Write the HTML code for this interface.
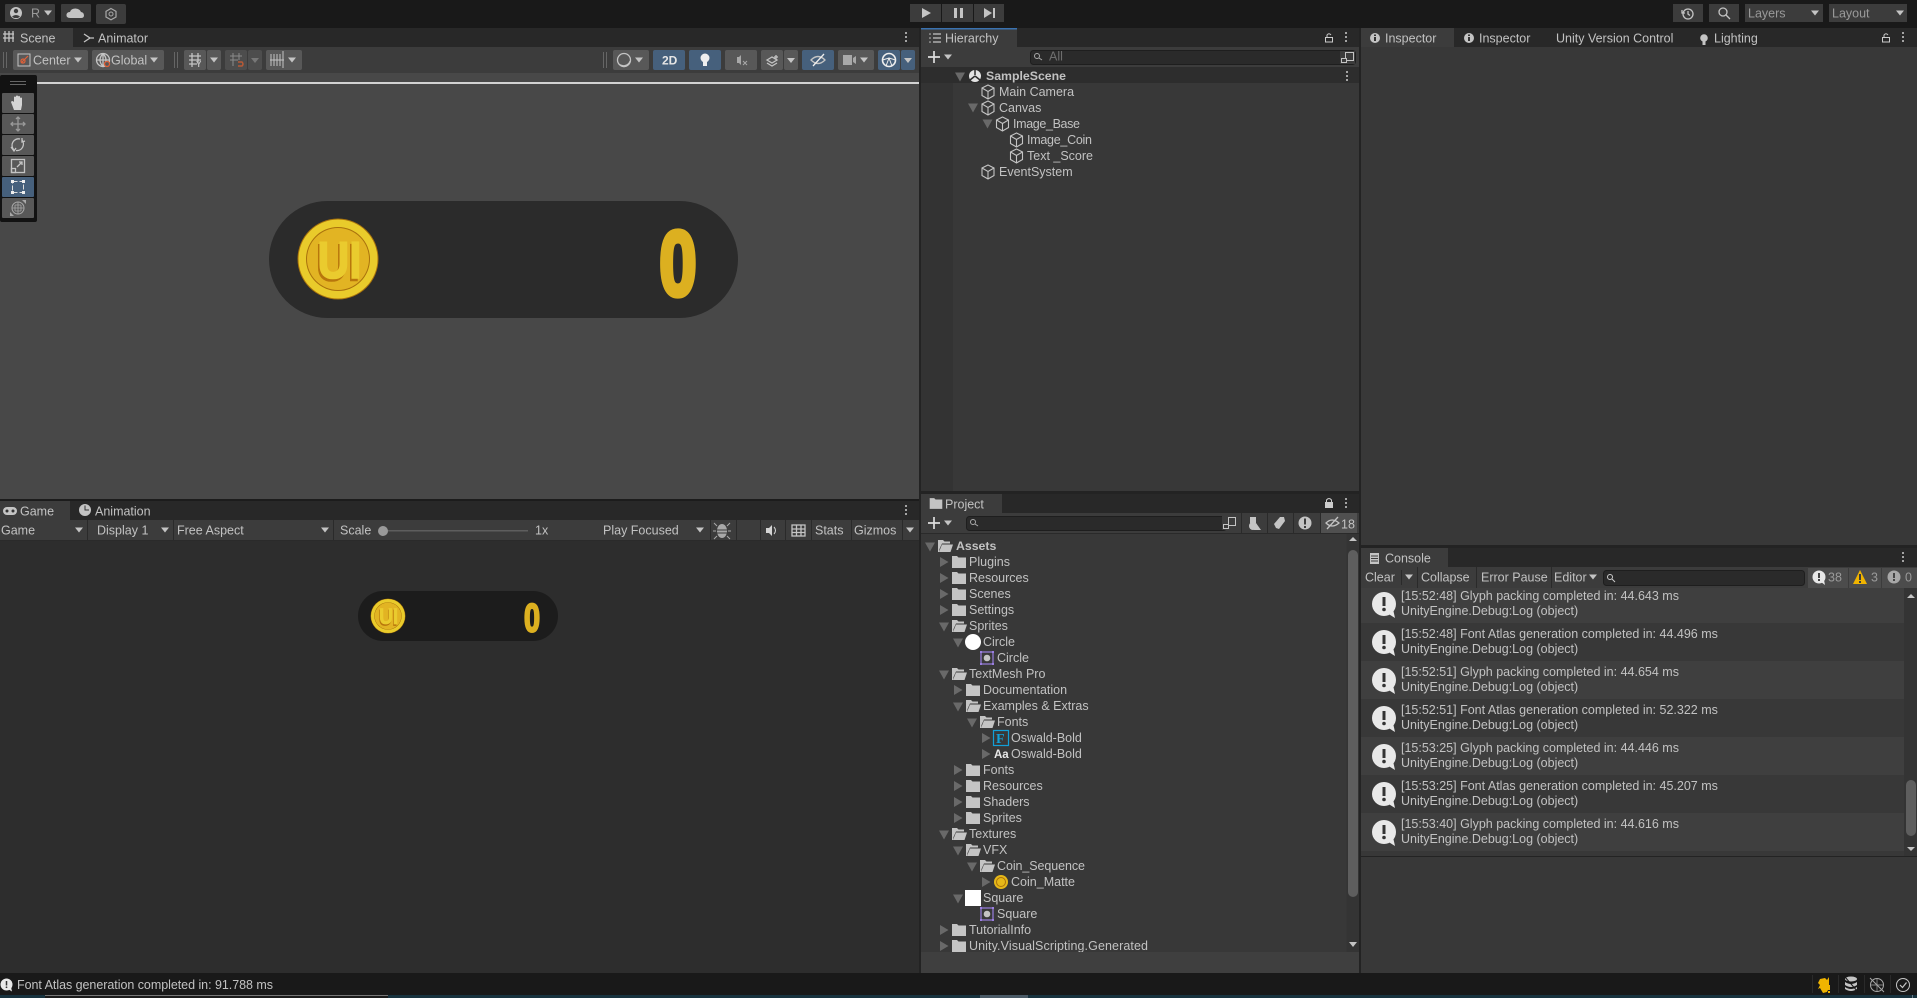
<!DOCTYPE html>
<html lang="en"><head><meta charset="utf-8"><title>Unity Editor</title>
<style>
html,body{margin:0;padding:0;background:#191919;width:1917px;height:998px;overflow:hidden}
svg{display:block}
text{font-family:"Liberation Sans",sans-serif;font-size:12.5px;fill:#c2c2c2}
text:not(.nt){transform:translateY(-.5px)}
.b{font-weight:bold}
.d{fill:#9a9a9a}
.s{fill:none;stroke:#c4c4c4;stroke-width:1.3}
.k{fill:#c4c4c4}
</style></head><body>
<svg width="1917" height="998" viewBox="0 0 1917 998" xmlns="http://www.w3.org/2000/svg">
<defs>
<polygon id="tdn" points="-5,-4.5 5,-4.5 0,4.5" fill="#696969"/>
<polygon id="trt" points="-4,-5 4.5,0 -4,5" fill="#696969"/>
<polygon id="dd" points="-4,-2.5 4,-2.5 0,2.5" fill="#c4c4c4"/>
<g id="cube" fill="none" stroke="#c4c4c4" stroke-width="1.1"><path d="M0,-7 L6,-4 V3.5 L0,7 L-6,3.5 V-4 Z"/><path d="M-6,-4 L0,-0.5 L6,-4 M0,-0.5 V7"/></g>
<path id="fol" fill="#c4c4c4" d="M-7,-6 H-2 L-0.5,-4.5 H7 V6 H-7 Z"/>
<g id="fop" fill="#c4c4c4"><path d="M-7,-6 H-2 L-0.5,-4.5 H5 V-2.5 H-3 L-5.5,3 L-6,6 H-7 Z"/><path d="M-3,-1.5 H8 L5.5,6 H-6 Z"/></g>
<g id="spr"><rect x="-6" y="-6" width="12" height="12" fill="none" stroke="#9a7ee0" stroke-width="1.2"/><circle cx="0" cy="0" r="3.3" fill="#c4c4c4"/><g fill="#9a7ee0"><rect x="-7" y="-7" width="2" height="2"/><rect x="5" y="-7" width="2" height="2"/><rect x="-7" y="5" width="2" height="2"/><rect x="5" y="5" width="2" height="2"/></g></g>
<g id="info"><circle cx="0" cy="-1" r="12" fill="#e8e8e8"/><path d="M3,8 L11,13 L9,4 Z" fill="#e8e8e8"/><rect x="-1.5" y="-8" width="3" height="9" fill="#333"/><circle cx="0" cy="4.5" r="1.8" fill="#333"/></g>
<g id="coin">
<circle r="40.5" fill="#a8720c"/><circle r="39.5" fill="#e9cb2b"/><circle r="32" fill="#a9710d"/><circle r="31" fill="#e2b423"/>
<text x="-22" y="21.5" class="b nt" style="font-size:52px;fill:#b8760c;stroke:#b8760c;stroke-width:1.6" textLength="44" lengthAdjust="spacingAndGlyphs">UI</text>
<text x="-20.5" y="19" class="b nt" style="font-size:52px;fill:#eacb2e;stroke:#eacb2e;stroke-width:1.6" textLength="44" lengthAdjust="spacingAndGlyphs">UI</text>
</g>
</defs>

<rect width="1917" height="998" fill="#191919"/>
<!-- taskbar hint -->
<rect y="995" width="1917" height="3" fill="#18333f"/>
<rect x="45" y="995" width="343" height="3" fill="#1b1b1b"/><rect x="45" y="995" width="343" height="1" fill="#777"/>
<rect x="980" y="995" width="48" height="3" fill="#4a5a66"/>

<!-- top bar -->
<g fill="#3c3c3c">
<rect x="5" y="4" width="50" height="18" rx="1"/><rect x="61" y="4" width="30" height="18" rx="1"/><rect x="96" y="4" width="30" height="20" rx="2"/>
<rect x="910" y="4" width="31" height="18"/><rect x="942" y="4" width="31" height="18"/><rect x="974" y="4" width="30" height="18"/>
<rect x="1673" y="4" width="30" height="18"/><rect x="1709" y="4" width="30" height="18"/><rect x="1745" y="4" width="78" height="18"/><rect x="1829" y="4" width="78" height="18"/>
</g>
<circle cx="16" cy="13" r="6" fill="#c4c4c4"/><circle cx="16" cy="11" r="2.2" fill="#3c3c3c"/><path d="M12,16.5 Q16,13.5 20,16.5 L18,18 H14 Z" fill="#3c3c3c"/>
<text x="31" y="18" class="d">R</text><use href="#dd" x="48" y="13"/>
<path d="M70,18 Q66,18 66.500,14.500 Q67,12 70,12 Q71,8.500 75.500,8.500 Q80,9 81,12 Q84,12.500 84,15.500 Q84,18 81,18 Z" fill="#c4c4c4"/>
<path d="M111,8.5 L116,11.3 V17 L111,19.8 L106,17 V11.3 Z" fill="none" stroke="#a8a8a8" stroke-width="1.2"/><circle cx="111" cy="14" r="2" fill="none" stroke="#a8a8a8"/>
<polygon points="922,8 922,18 931,13" fill="#c4c4c4"/>
<rect x="954" y="8" width="3" height="10" fill="#c4c4c4"/><rect x="960" y="8" width="3" height="10" fill="#c4c4c4"/>
<polygon points="984,8 984,18 992,13" fill="#c4c4c4"/><rect x="993" y="8" width="2" height="10" fill="#c4c4c4"/>
<circle cx="1688" cy="14" r="5" class="s"/><path d="M1688,11 V14 L1690,15.5 M1682,10 V13 H1685" class="s"/>
<circle cx="1723" cy="12" r="4" class="s"/><path d="M1726,15 L1730,19" class="s" stroke-width="2"/>
<text x="1748" y="18" class="d">Layers</text><use href="#dd" x="1815" y="13"/>
<text x="1832" y="18" class="d">Layout</text><use href="#dd" x="1900" y="13"/>

<!-- scene panel -->
<rect x="0" y="28" width="919" height="19" fill="#282828"/>
<rect x="0" y="28" width="73" height="19" fill="#3c3c3c"/>
<path d="M6,32 V43 M10,32 V43 M14,32 V43 M4,35 H15 M4,39 H15" class="s" stroke-width="1.1" transform="translate(-1,-1)"/>
<text x="20" y="43">Scene</text>
<path d="M84,34 L90,38 L84,42 M90,38 H94" class="s"/><text x="98" y="43">Animator</text>
<circle cx="906" cy="33" r="1" fill="#ccc"/><circle cx="906" cy="37" r="1" fill="#ccc"/><circle cx="906" cy="41" r="1" fill="#ccc"/>
<rect y="47" width="919" height="26" fill="#3c3c3c"/>
<rect y="73" width="919" height="426" fill="#484848"/>
<rect y="82" width="919" height="2" fill="#d2d2d2"/>
<!-- scene toolbar -->
<g fill="#585858">
<rect x="13" y="50" width="75" height="20" rx="2"/><rect x="92" y="50" width="72" height="20" rx="2"/>
<rect x="184" y="50" width="22" height="20" rx="2"/><rect x="207" y="50" width="14" height="20" rx="2"/>
<rect x="225" y="50" width="22" height="20" rx="2" opacity=".6"/><rect x="248" y="50" width="14" height="20" rx="2" opacity=".6"/>
<rect x="266" y="50" width="36" height="20" rx="2"/>
<rect x="613" y="50" width="36" height="20" rx="2"/><rect x="725" y="50" width="32" height="20" rx="2"/>
<rect x="761" y="50" width="22" height="20" rx="2"/><rect x="784" y="50" width="14" height="20" rx="2"/>
<rect x="838" y="50" width="36" height="20" rx="2"/>
</g>
<g fill="#46607c">
<rect x="653" y="50" width="32" height="20" rx="2"/><rect x="689" y="50" width="32" height="20" rx="2"/><rect x="802" y="50" width="32" height="20" rx="2"/>
<rect x="878" y="50" width="22" height="20" rx="2"/><rect x="901" y="50" width="14" height="20" rx="2"/>
</g>
<g fill="#666"><rect x="3" y="52" width="1" height="16"/><rect x="6" y="52" width="1" height="16"/><rect x="174" y="52" width="1" height="16"/><rect x="177" y="52" width="1" height="16"/><rect x="603" y="52" width="1" height="16"/><rect x="606" y="52" width="1" height="16"/></g>
<rect x="18" y="54" width="12" height="12" fill="none" stroke="#c4c4c4"/><path d="M21,63 L28,56" stroke="#e06038" stroke-width="1.2"/><circle cx="23" cy="61" r="2" fill="none" stroke="#e06038" stroke-width="1.2"/>
<text x="33" y="65">Center</text><use href="#dd" x="78" y="60"/>
<circle cx="103" cy="60" r="6.5" class="s"/><path d="M96.5,60 H109.5 M103,53.5 V66.500 M103,53.500 Q97,60 103,66.500 Q109,60 103,53.500" class="s" stroke-width=".8"/><circle cx="107" cy="64" r="2.500" fill="#585858" stroke="#e06038" stroke-width="1.300"/>
<text x="111" y="65">Global</text><use href="#dd" x="154" y="60"/>
<path d="M189,56 H201 M189,60 H201 M189,64 H197 M192,53 V67 M198,53 V63" class="s" stroke-width="1"/><text x="196" y="67" class="b nt" style="font-size:8px">Y</text><use href="#dd" x="214" y="60"/>
<path d="M230,56 H242 M230,60 H238 M233,53 V66 M239,53 V60" stroke="#8a8a8a" fill="none"/><path d="M238,62 H242 Q244,64 242,66 H238" stroke="#b85a36" stroke-width="1.500" fill="none"/><polygon points="251,58 259,58 255,63" fill="#777"/>
<path d="M271,54 V66 M274,54 V66 M277,54 V66 M280,54 V66 M283,51 V68" stroke="#c4c4c4"/><path d="M270,60 H284" stroke="#c4c4c4"/><use href="#dd" x="292" y="60"/>
<circle cx="624" cy="60" r="6.500" class="s"/><path d="M619,64 A7,7 0 0,0 630,61 A6,6 0 0,1 619,64" fill="#c4c4c4" stroke="#c4c4c4"/><use href="#dd" x="639" y="60"/>
<text x="662" y="65" class="b" style="fill:#e6e6e6;font-size:12px">2D</text>
<circle cx="705" cy="58" r="4.500" fill="#eee"/><rect x="703" y="62" width="4" height="4" fill="#eee"/>
<path d="M737,57 H739 L741,55 V65 L739,63 H737 Z" fill="#a8a8a8"/><path d="M743,61 L747,65 M747,61 L743,65" stroke="#a8a8a8"/>
<path d="M767,60 L772,57 L777,60 L772,63 Z M767,63 L772,66 L777,63" class="s" stroke-width="1.200"/><path d="M776,55 V59 M774,57 H778" class="s"/><polygon points="787,58 795,58 791,63" fill="#c4c4c4"/>
<path d="M811,60 Q818,53 825,60 Q818,67 811,60 Z" class="s" stroke="#eee"/><path d="M813,66 L824,54" stroke="#eee" stroke-width="1.300"/>
<rect x="843" y="55" width="9" height="10" fill="#a8a8a8"/><polygon points="853,58 856,56 856,64 853,62" fill="#a8a8a8"/><use href="#dd" x="864" y="60"/>
<circle cx="889" cy="60" r="6.500" fill="none" stroke="#eee" stroke-width="1.600"/><path d="M882.500,60 L889,58 L895.500,60 M889,58 L886,66 M889,58 L892,66" stroke="#eee" fill="none"/><polygon points="904,58 912,58 908,63" fill="#c4c4c4"/>

<!-- tools overlay -->
<rect y="75" width="37" height="147" rx="2" fill="#121212"/>
<rect x="10" y="81" width="16" height="1" fill="#666"/><rect x="10" y="84" width="16" height="1" fill="#666"/>
<g fill="#585858"><rect x="2" y="93" width="32" height="20" rx="1"/><rect x="2" y="114" width="32" height="20" rx="1"/><rect x="2" y="135" width="32" height="20" rx="1"/><rect x="2" y="156" width="32" height="20" rx="1"/><rect x="2" y="198" width="32" height="20" rx="1"/></g>
<rect x="2" y="177" width="32" height="20" rx="1" fill="#46607c"/>
<path d="M14,110 L11,102 Q12,100 14,102 V97 Q15,96 16,97 V101 V96 Q17,95 18,96 V101 V96.500 Q19,95.500 20,96.500 V101 V98 Q21,97 22,98 V105 L21,110 Z" fill="#d4d4d4"/>
<path d="M18,117 V131 M11,124 H25 M16,119 L18,117 L20,119 M16,129 L18,131 L20,129 M13,122 L11,124 L13,126 M23,122 L25,124 L23,126" fill="none" stroke="#9a9a9a" stroke-width="1.300"/>
<path d="M20,139 A6.500,6.500 0 0,0 14,150 M16,150.500 A6.500,6.500 0 0,0 22,140" class="s"/><path d="M11,147 L14,151 L16,148 M22,138 L22,142 L25,141" class="s" stroke-width="1"/>
<rect x="11.500" y="159.500" width="13" height="13" class="s"/><rect x="11.500" y="168.500" width="4" height="4" class="s"/><path d="M17,167 L22,162 M19,162 H22 V165" class="s"/>
<rect x="12.500" y="181.500" width="11" height="11" fill="none" stroke="#ddd" stroke-width="1" stroke-dasharray="5 2"/><g fill="#eee"><rect x="11" y="180" width="3" height="3"/><rect x="22" y="180" width="3" height="3"/><rect x="11" y="191" width="3" height="3"/><rect x="22" y="191" width="3" height="3"/></g>
<circle cx="18" cy="208" r="6" fill="none" stroke="#a8a8a8" stroke-width="1"/><path d="M12,208 H24 M18,202 V214 M15,205 H21 M15,211 H21 M15,205 V211 M21,205 V211" fill="none" stroke="#a8a8a8" stroke-width=".8"/><polygon points="10,216 14,216 10,212" fill="#a8a8a8"/><polygon points="26,200 22,200 26,204" fill="#a8a8a8"/>

<!-- big pill -->
<rect x="269" y="201" width="469" height="117" rx="58.500" fill="#2b2b2b"/>
<use href="#coin" transform="translate(338,259)"/>
<text text-anchor="middle" transform="translate(678,295) scale(.76,1.040)" class="b nt" style="font-size:88px;fill:#dcb020;stroke:#dcb020;stroke-width:5;stroke-linejoin:round">0</text>

<!-- dark separators -->
<rect x="0" y="499" width="919" height="2" fill="#1c1c1c"/>
<rect x="919" y="28" width="2" height="945" fill="#232323"/>
<rect x="1359" y="28" width="2" height="945" fill="#232323"/>

<!-- game panel -->
<rect y="501" width="919" height="19" fill="#282828"/>
<rect y="501" width="70" height="19" fill="#3c3c3c"/>
<rect x="3" y="507" width="14" height="8" rx="4" fill="#c4c4c4"/><circle cx="7" cy="511" r="1.500" fill="#333"/><circle cx="13" cy="511" r="1.500" fill="#333"/>
<text x="20" y="516">Game</text>
<circle cx="85" cy="510" r="6" fill="#c4c4c4"/><path d="M85,505.500 V510 H89" stroke="#333" fill="none"/>
<text x="95" y="516">Animation</text>
<circle cx="906" cy="506" r="1" fill="#ccc"/><circle cx="906" cy="510" r="1" fill="#ccc"/><circle cx="906" cy="514" r="1" fill="#ccc"/>
<rect y="520" width="919" height="21" fill="#3c3c3c"/>
<rect y="541" width="919" height="432" fill="#2d2d2d"/>
<g fill="#2a2a2a"><rect x="87" y="520" width="1" height="21"/><rect x="173" y="520" width="1" height="21"/><rect x="333" y="520" width="1" height="21"/><rect x="710" y="520" width="1" height="21"/><rect x="736" y="520" width="1" height="21"/><rect x="760" y="520" width="1" height="21"/><rect x="785" y="520" width="1" height="21"/><rect x="811" y="520" width="1" height="21"/><rect x="851" y="520" width="1" height="21"/><rect x="902" y="520" width="1" height="21"/><rect y="540" width="919" height="1"/></g>
<text x="1" y="535">Game</text><use href="#dd" x="79" y="530"/>
<text x="97" y="535">Display 1</text><use href="#dd" x="165" y="530"/>
<text x="177" y="535">Free Aspect</text><use href="#dd" x="325" y="530"/>
<text x="340" y="535">Scale</text>
<rect x="383" y="530" width="145" height="1.500" fill="#5e5e5e"/><circle cx="383" cy="531" r="5" fill="#999"/>
<text x="535" y="535">1x</text>
<text x="603" y="535">Play Focused</text><use href="#dd" x="700" y="530"/>
<ellipse cx="722" cy="531" rx="5" ry="7" fill="#a8a8a8"/><path d="M717,526 L714,523 M727,526 L730,523 M716,531 H713 M728,531 H731 M717,536 L714,539 M727,536 L730,539" stroke="#a8a8a8"/><path d="M717,530 H727 M717,533 H727" stroke="#3c3c3c"/>
<path d="M766,528 H769 L772,525 V536 L769,533 H766 Z" fill="#d4d4d4"/><path d="M774,527 Q777,530.500 774,534" stroke="#d4d4d4" fill="none"/>
<rect x="792" y="525" width="13" height="11" class="s" stroke-width="1"/><path d="M792,529 H805 M792,532.500 H805 M796.500,525 V536 M801,525 V536" class="s" stroke-width="1"/>
<text x="815" y="535">Stats</text><text x="854" y="535">Gizmos</text><use href="#dd" x="910" y="530"/>
<rect x="358" y="591" width="200" height="50" rx="25" fill="#1c1c1c"/>
<use href="#coin" transform="translate(388,616) scale(.43)"/>
<text text-anchor="middle" transform="translate(532,631.500) scale(.76,1.040)" class="b nt" style="font-size:38px;fill:#dcb020;stroke:#dcb020;stroke-width:2;stroke-linejoin:round">0</text>

<!-- hierarchy -->
<rect x="921" y="28" width="438" height="19" fill="#282828"/>
<rect x="921" y="28" width="96" height="19" fill="#3c3c3c"/><rect x="921" y="28" width="96" height="1.500" fill="#3a72b0"/>
<path d="M933,34 H941 M933,38 H941 M933,42 H941" class="s"/><circle cx="930" cy="34" r=".8" fill="#c4c4c4"/><circle cx="930" cy="38" r=".8" fill="#c4c4c4"/><circle cx="930" cy="42" r=".8" fill="#c4c4c4"/>
<text x="945" y="43">Hierarchy</text>
<rect x="1325.500" y="37.500" width="7" height="4.500" fill="none" stroke="#ccc"/><path d="M1327,37 V35 Q1329,32.500 1331,35" fill="none" stroke="#ccc"/>
<circle cx="1346" cy="33" r="1" fill="#ccc"/><circle cx="1346" cy="37" r="1" fill="#ccc"/><circle cx="1346" cy="41" r="1" fill="#ccc"/>
<rect x="921" y="47" width="438" height="20" fill="#3c3c3c"/>
<path d="M934,51 V63 M928,57 H940" stroke="#ddd" stroke-width="1.700"/><use href="#dd" x="948" y="57"/>
<rect x="1030.500" y="50.500" width="325" height="14" rx="3" fill="#2a2a2a" stroke="#1e1e1e"/>
<circle cx="1037" cy="56" r="2.500" fill="none" stroke="#aaa"/><path d="M1039,58 L1042,60" stroke="#aaa"/>
<text x="1049" y="61" style="fill:#6e6e6e">All</text>
<rect x="1340" y="51" width="15" height="13" fill="#3c3c3c"/><rect x="1345.500" y="52.500" width="8" height="8" fill="none" stroke="#c4c4c4"/><rect x="1341.500" y="58.500" width="5" height="4" fill="#3c3c3c" stroke="#c4c4c4"/>
<rect x="921" y="67" width="438" height="424" fill="#383838"/>
<rect x="921" y="83" width="32" height="408" fill="#333"/>
<rect x="921" y="67" width="438" height="16" fill="#2d2d2d"/>
<use href="#tdn" x="960" y="77"/>
<circle cx="975" cy="76" r="6" fill="#e4e4e4"/><path d="M975,70 V75 M975,76 L970,80 M975,76 L980,80" stroke="#2d2d2d" stroke-width="1.500"/>
<text x="986" y="80.500" class="b" style="font-size:12.300px">SampleScene</text>
<circle cx="1347" cy="72" r="1" fill="#ccc"/><circle cx="1347" cy="76" r="1" fill="#ccc"/><circle cx="1347" cy="80" r="1" fill="#ccc"/>
<use href="#cube" x="988" y="92"/><text x="999" y="96.500">Main Camera</text>
<use href="#tdn" x="973" y="108"/><use href="#cube" x="988" y="108"/><text x="999" y="112.500">Canvas</text>
<use href="#tdn" x="987.500" y="124"/><use href="#cube" x="1002.500" y="124"/><text x="1013" y="128.500" textLength="67">Image_Base</text>
<use href="#cube" x="1016.500" y="140"/><text x="1027" y="144.500" textLength="65">Image_Coin</text>
<use href="#cube" x="1016.500" y="156"/><text x="1027" y="160.500" textLength="66">Text _Score</text>
<use href="#cube" x="988" y="172"/><text x="999" y="176.500">EventSystem</text>
<rect x="921" y="491" width="438" height="3" fill="#232323"/>

<!-- project -->
<rect x="921" y="494" width="438" height="19" fill="#282828"/>
<rect x="921" y="494" width="81" height="19" fill="#3c3c3c"/>
<use href="#fol" transform="translate(936,503.500) scale(.9)"/><text x="945" y="509">Project</text>
<rect x="1325" y="502" width="8" height="6" fill="#ccc"/><path d="M1326.500,502 V500 Q1329,497 1331.500,500 V502" fill="none" stroke="#ccc"/>
<circle cx="1346" cy="499" r="1" fill="#ccc"/><circle cx="1346" cy="503" r="1" fill="#ccc"/><circle cx="1346" cy="507" r="1" fill="#ccc"/>
<rect x="921" y="513" width="438" height="20" fill="#3c3c3c"/><rect x="921" y="533" width="438" height="1" fill="#2a2a2a"/>
<path d="M934,517 V529 M928,523 H940" stroke="#ddd" stroke-width="1.700"/><use href="#dd" x="948" y="523"/>
<rect x="966.500" y="516.500" width="260" height="14" rx="3" fill="#2a2a2a" stroke="#1e1e1e"/>
<circle cx="973" cy="522" r="2.500" fill="none" stroke="#aaa"/><path d="M975,524 L978,526" stroke="#aaa"/>
<rect x="1222" y="516" width="14" height="14" fill="#3c3c3c"/><rect x="1228.500" y="517.500" width="7" height="8" fill="none" stroke="#c4c4c4"/><rect x="1223.500" y="524.500" width="5" height="4" fill="#3c3c3c" stroke="#c4c4c4"/>
<g fill="#2a2a2a"><rect x="1241" y="513" width="1" height="20"/><rect x="1267" y="513" width="1" height="20"/><rect x="1293" y="513" width="1" height="20"/><rect x="1320" y="513" width="1" height="20"/></g>
<rect x="1321" y="513" width="36" height="20" fill="#505050"/>
<rect x="1250" y="517" width="6" height="6" fill="#c4c4c4"/><circle cx="1253" cy="526" r="4" fill="#c4c4c4"/><polygon points="1256,523 1261,530 1254,530" fill="#c4c4c4"/>
<path d="M1276,528 L1274,524 L1280,517 H1284 L1285,521 L1279,529 Z" fill="#c4c4c4"/>
<circle cx="1305" cy="523" r="6.500" fill="#c4c4c4"/><rect x="1304" y="518.500" width="2" height="6" fill="#3c3c3c"/><rect x="1304" y="526" width="2" height="2" fill="#3c3c3c"/>
<path d="M1326,523 Q1332,517 1339,523 Q1332,529 1326,523 Z" class="s" stroke-width="1"/><path d="M1327,529 L1338,517" class="s" stroke-width="1"/>
<text x="1341" y="529">18</text>
<rect x="921" y="534" width="438" height="418" fill="#383838"/>
<rect x="921" y="952" width="438" height="21" fill="#3f3f3f"/>
<rect x="1346.500" y="534" width="12.500" height="418" fill="#343434"/>
<rect x="1348" y="550" width="10" height="347" rx="5" fill="#5e5e5e"/>
<polygon points="1349,541 1357,541 1353,537" fill="#c4c4c4"/><polygon points="1349,942 1357,942 1353,947" fill="#c4c4c4"/>
<svg x="921" y="534" width="425" height="418" viewBox="921 534 425 418" overflow="hidden">
<use href="#tdn" x="930" y="547"/><use href="#fop" x="945" y="546"/><text x="956" y="550.500" class="b" style="font-size:12.300px">Assets</text>
<use href="#trt" x="944" y="562"/><use href="#fol" x="959" y="562"/><text x="969" y="566.500">Plugins</text>
<use href="#trt" x="944" y="578"/><use href="#fol" x="959" y="578"/><text x="969" y="582.500">Resources</text>
<use href="#trt" x="944" y="594"/><use href="#fol" x="959" y="594"/><text x="969" y="598.500">Scenes</text>
<use href="#trt" x="944" y="610"/><use href="#fol" x="959" y="610"/><text x="969" y="614.500">Settings</text>
<use href="#tdn" x="944" y="627"/><use href="#fop" x="959" y="626"/><text x="969" y="630.500">Sprites</text>
<use href="#tdn" x="958" y="643"/><circle cx="973" cy="642" r="8" fill="#fff"/><text x="983" y="646.500">Circle</text>
<use href="#spr" x="987" y="658"/><text x="997" y="662.500">Circle</text>
<use href="#tdn" x="944" y="675"/><use href="#fop" x="959" y="674"/><text x="969" y="678.500">TextMesh Pro</text>
<use href="#trt" x="958" y="690"/><use href="#fol" x="973" y="690"/><text x="983" y="694.500">Documentation</text>
<use href="#tdn" x="958" y="707"/><use href="#fop" x="973" y="706"/><text x="983" y="710.500">Examples &amp; Extras</text>
<use href="#tdn" x="972" y="723"/><use href="#fop" x="987" y="722"/><text x="997" y="726.500">Fonts</text>
<use href="#trt" x="986" y="738"/><rect x="993.500" y="730.500" width="15" height="15" fill="none" stroke="#12a0d8" stroke-width="1.200"/><text x="996" y="743" class="b nt" style="font-size:14px;fill:#12a0d8;font-family:'Liberation Serif',serif">F</text><text x="1011" y="742.500">Oswald-Bold</text>
<use href="#trt" x="986" y="754"/><text x="994" y="758.500" class="b" style="fill:#e8e8e8;font-size:11.500px">Aa</text><text x="1011" y="758.500">Oswald-Bold</text>
<use href="#trt" x="958" y="770"/><use href="#fol" x="973" y="770"/><text x="983" y="774.500">Fonts</text>
<use href="#trt" x="958" y="786"/><use href="#fol" x="973" y="786"/><text x="983" y="790.500">Resources</text>
<use href="#trt" x="958" y="802"/><use href="#fol" x="973" y="802"/><text x="983" y="806.500">Shaders</text>
<use href="#trt" x="958" y="818"/><use href="#fol" x="973" y="818"/><text x="983" y="822.500">Sprites</text>
<use href="#tdn" x="944" y="835"/><use href="#fop" x="959" y="834"/><text x="969" y="838.500">Textures</text>
<use href="#tdn" x="958" y="851"/><use href="#fop" x="973" y="850"/><text x="983" y="854.500">VFX</text>
<use href="#tdn" x="972" y="867"/><use href="#fop" x="987" y="866"/><text x="997" y="870.500" textLength="88">Coin_Sequence</text>
<use href="#trt" x="986" y="882"/><circle cx="1001" cy="882" r="7" fill="#e6b818"/><circle cx="1001" cy="882" r="4.500" fill="none" stroke="#a9710d"/><text x="1011" y="886.500" textLength="64">Coin_Matte</text>
<use href="#tdn" x="958" y="899"/><rect x="965" y="890" width="16" height="16" fill="#fff"/><text x="983" y="902.500">Square</text>
<use href="#spr" x="987" y="914"/><text x="997" y="918.500">Square</text>
<use href="#trt" x="944" y="930"/><use href="#fol" x="959" y="930"/><text x="969" y="934.500">TutorialInfo</text>
<use href="#trt" x="944" y="946"/><use href="#fol" x="959" y="946"/><text x="969" y="950.500" textLength="179">Unity.VisualScripting.Generated</text>
</svg>

<!-- inspector -->
<rect x="1361" y="28" width="556" height="19" fill="#282828"/>
<rect x="1361" y="28" width="93" height="19" fill="#3c3c3c"/>
<rect x="1361" y="47" width="556" height="498" fill="#383838"/>
<circle cx="1375" cy="38" r="5" fill="#c4c4c4"/><rect x="1374" y="37" width="2" height="4" fill="#333"/><rect x="1374" y="34.500" width="2" height="1.500" fill="#333"/>
<text x="1385" y="43">Inspector</text>
<circle cx="1469" cy="38" r="5" fill="#c4c4c4"/><rect x="1468" y="37" width="2" height="4" fill="#333"/><rect x="1468" y="34.500" width="2" height="1.500" fill="#333"/>
<text x="1479" y="43">Inspector</text>
<text x="1556" y="43">Unity Version Control</text>
<circle cx="1704" cy="38" r="3.800" fill="#c4c4c4"/><rect x="1702.500" y="41" width="3" height="4" fill="#c4c4c4"/>
<text x="1714" y="43">Lighting</text>
<rect x="1882.500" y="37.500" width="7" height="4.500" fill="none" stroke="#ccc"/><path d="M1884,37 V35 Q1886,32.500 1888,35" fill="none" stroke="#ccc"/>
<circle cx="1903" cy="33" r="1" fill="#ccc"/><circle cx="1903" cy="37" r="1" fill="#ccc"/><circle cx="1903" cy="41" r="1" fill="#ccc"/>
<rect x="1361" y="545" width="556" height="3" fill="#232323"/>

<!-- console -->
<rect x="1361" y="548" width="556" height="19" fill="#282828"/>
<rect x="1361" y="548" width="87" height="19" fill="#3c3c3c"/>
<rect x="1370" y="553" width="9" height="11" fill="#c4c4c4"/><path d="M1371,556 H1378 M1371,558.500 H1378 M1371,561 H1378" stroke="#3c3c3c"/>
<text x="1385" y="563">Console</text>
<circle cx="1903" cy="553" r="1" fill="#ccc"/><circle cx="1903" cy="557" r="1" fill="#ccc"/><circle cx="1903" cy="561" r="1" fill="#ccc"/>
<rect x="1361" y="567" width="556" height="21" fill="#3c3c3c"/>
<text x="1365" y="582">Clear</text><use href="#dd" x="1409" y="577"/>
<text x="1421" y="582">Collapse</text><text x="1481" y="582">Error Pause</text><text x="1554" y="582">Editor</text><use href="#dd" x="1593" y="577"/>
<g fill="#2a2a2a"><rect x="1401" y="570" width="1" height="15"/><rect x="1417" y="567" width="1" height="21"/><rect x="1476" y="567" width="1" height="21"/><rect x="1551" y="567" width="1" height="21"/></g>
<rect x="1603.500" y="570.500" width="201" height="15" rx="3" fill="#2a2a2a" stroke="#1e1e1e"/>
<circle cx="1610" cy="577" r="2.500" fill="none" stroke="#ccc"/><path d="M1612,579 L1615,582" stroke="#ccc"/>
<rect x="1808" y="568" width="40" height="20" fill="#4c4c4c"/><rect x="1849" y="568" width="32" height="20" fill="#4c4c4c"/><rect x="1882" y="568" width="35" height="20" fill="#4c4c4c"/>
<circle cx="1819" cy="577" r="6.500" fill="#e8e8e8"/><path d="M1821,582 L1825,585 L1824,580 Z" fill="#e8e8e8"/><rect x="1818" y="573" width="2" height="5" fill="#444"/><rect x="1818" y="579" width="2" height="2" fill="#444"/>
<text x="1828" y="582" class="d">38</text>
<polygon points="1860,570 1867,584 1853,584" fill="#f0b400"/><rect x="1859" y="574" width="2" height="6" fill="#3c3c3c"/><rect x="1859" y="581" width="2" height="2" fill="#3c3c3c"/>
<text x="1871" y="582" class="d">3</text>
<circle cx="1894" cy="577" r="6.500" fill="#a8a8a8"/><rect x="1893" y="573" width="2" height="5" fill="#444"/><rect x="1893" y="579" width="2" height="2" fill="#444"/>
<text x="1905" y="582" class="d">0</text>
<rect x="1361" y="588" width="556" height="385" fill="#383838"/>
<rect x="1361" y="588" width="543" height="35" fill="#3f3f3f"/>
<rect x="1361" y="661" width="543" height="38" fill="#3f3f3f"/>
<rect x="1361" y="737" width="543" height="38" fill="#3f3f3f"/>
<rect x="1361" y="813" width="543" height="38" fill="#3f3f3f"/>
<rect x="1904" y="588" width="13" height="268" fill="#343434"/>
<rect x="1906" y="780" width="10" height="56" rx="5" fill="#5e5e5e"/>
<polygon points="1907,598 1915,598 1911,594" fill="#c4c4c4"/><polygon points="1907,847 1915,847 1911,851" fill="#c4c4c4"/>
<rect x="1361" y="856" width="556" height="1" fill="#232323"/>
<use href="#info" x="1384" y="605"/><text x="1401" y="600.500">[15:52:48] Glyph packing completed in: 44.643 ms</text><text x="1401" y="615.500">UnityEngine.Debug:Log (object)</text>
<use href="#info" x="1384" y="643"/><text x="1401" y="638.500">[15:52:48] Font Atlas generation completed in: 44.496 ms</text><text x="1401" y="653.500">UnityEngine.Debug:Log (object)</text>
<use href="#info" x="1384" y="681"/><text x="1401" y="676.500">[15:52:51] Glyph packing completed in: 44.654 ms</text><text x="1401" y="691.500">UnityEngine.Debug:Log (object)</text>
<use href="#info" x="1384" y="719"/><text x="1401" y="714.500">[15:52:51] Font Atlas generation completed in: 52.322 ms</text><text x="1401" y="729.500">UnityEngine.Debug:Log (object)</text>
<use href="#info" x="1384" y="757"/><text x="1401" y="752.500">[15:53:25] Glyph packing completed in: 44.446 ms</text><text x="1401" y="767.500">UnityEngine.Debug:Log (object)</text>
<use href="#info" x="1384" y="795"/><text x="1401" y="790.500">[15:53:25] Font Atlas generation completed in: 45.207 ms</text><text x="1401" y="805.500">UnityEngine.Debug:Log (object)</text>
<use href="#info" x="1384" y="833"/><text x="1401" y="828.500">[15:53:40] Glyph packing completed in: 44.616 ms</text><text x="1401" y="843.500">UnityEngine.Debug:Log (object)</text>

<!-- status bar -->
<use href="#info" transform="translate(6.500,985) scale(.5)"/>
<text x="17" y="989.500" textLength="256">Font Atlas generation completed in: 91.788 ms</text>
<g fill="#2a2a2a"><rect x="1812" y="975" width="1" height="18"/><rect x="1838" y="975" width="1" height="18"/><rect x="1864" y="975" width="1" height="18"/><rect x="1890" y="975" width="1" height="18"/></g>
<path d="M1820,979 L1825,978 L1827,980 L1829,977 V988 L1827,992 L1823,993 L1820,988 L1818,989 L1820,985 L1818,983 Z" fill="#f0b400"/><rect x="1828" y="985" width="2" height="5" fill="#f0b400"/><rect x="1828" y="991" width="2" height="2" fill="#f0b400"/>
<ellipse cx="1851" cy="979" rx="6" ry="2.500" fill="#c4c4c4"/><path d="M1845,982 Q1851,986 1857,982 V985 Q1851,989 1845,985 Z M1845,987 Q1851,991 1857,987 V989 Q1851,993 1845,989 Z" fill="#c4c4c4"/><path d="M1845,977 L1858,992" stroke="#191919" stroke-width="1"/>
<circle cx="1877" cy="985" r="6.500" fill="none" stroke="#a8a8a8"/><path d="M1870,978 L1884,992" stroke="#a8a8a8"/><path d="M1877,978.500 V991.500 M1870.500,985 H1883.500" stroke="#a8a8a8" stroke-width=".7"/>
<circle cx="1903" cy="985" r="6.500" fill="none" stroke="#c4c4c4"/><path d="M1900,985 L1902.500,987.500 L1906.500,982.500" fill="none" stroke="#c4c4c4" stroke-width="1.200"/>
<rect x="1912" y="995" width="1" height="3" fill="#6a7a88"/>
</svg>
</body></html>
